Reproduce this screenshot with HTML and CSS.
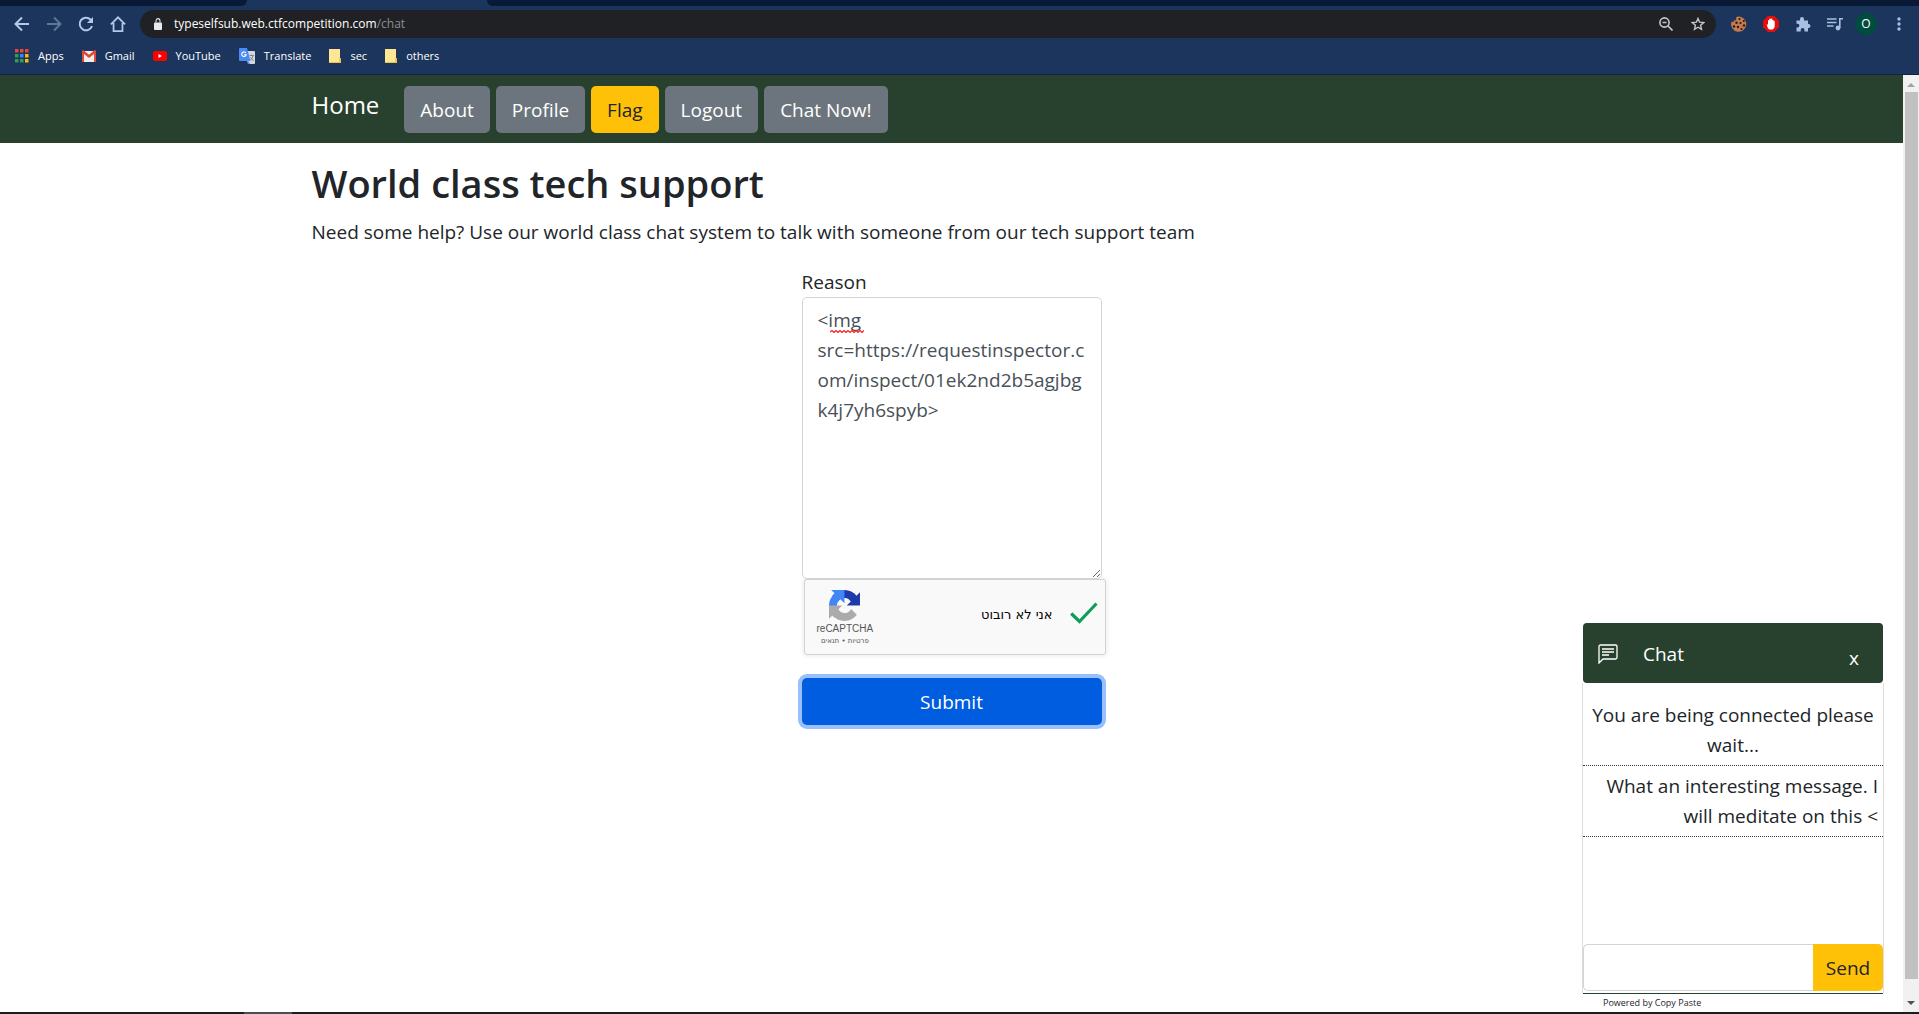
FILE: index.html
```html
<!DOCTYPE html>
<html lang="en">
<head>
<meta charset="utf-8">
<title>World class tech support</title>
<link rel="stylesheet" href="styles.css">
</head>
<body>
<header class="browser">
  <div class="tabstrip"><span class="tab-left"></span><span class="tab-active"></span><span class="tab-right"></span></div>
  <div class="toolbar">
    <div class="nav-icons">
      <button class="icon-btn" aria-label="Back"><svg width="16" height="16" viewBox="0 0 16 16" fill="none" stroke="#b4c8e8" stroke-width="2"><path d="M15 8H2M8 1.5L1.5 8L8 14.500"/></svg></button>
      <button class="icon-btn" aria-label="Forward"><svg width="16" height="16" viewBox="0 0 16 16" fill="none" stroke="#5f7698" stroke-width="2"><path d="M1 8H14M8 1.500L14.500 8L8 14.500"/></svg></button>
      <button class="icon-btn" aria-label="Reload"><svg width="16" height="16" viewBox="0 0 16 16" fill="none" stroke="#b4c8e8" stroke-width="2"><path d="M14 10A6.300 6.300 0 1 1 12.500 3.500L14 5"/><path d="M15 1v6H9z" fill="#b4c8e8" stroke="none"/></svg></button>
      <button class="icon-btn" aria-label="Home page"><svg width="16" height="16" viewBox="0 0 18 18" fill="none" stroke="#b4c8e8" stroke-width="2"><path d="M1 9.500L9 1.500L17 9.500M4 8v9h10V8"/></svg></button>
    </div>
    <div class="omnibox">
      <svg width="8" height="12" viewBox="0 0 10 13" preserveAspectRatio="none"><path d="M1 5h8a1 1 0 0 1 1 1v6a1 1 0 0 1-1 1H1a1 1 0 0 1-1-1V6a1 1 0 0 1 1-1z" fill="#e8eaed"/><path d="M2.500 5V3.200a2.500 2.500 0 0 1 5 0V5" fill="none" stroke="#e8eaed" stroke-width="1.300"/></svg>
      <span class="url">typeselfsub.web.ctfcompetition.com<span class="path">/chat</span></span>
      <svg width="14" height="14" viewBox="0 0 14 14" fill="none" stroke="#c4c7cc" stroke-width="1.600"><circle cx="5.500" cy="5.500" r="4.600"/><path d="M9 9l4.500 4.500M3.500 5.500h4"/></svg>
      <svg class="star" width="14" height="14" viewBox="0 0 14 14" fill="none" stroke="#c4c7cc" stroke-width="1.400"><path d="M7 1.500l1.600 3.700 4.100.4-3.100 2.700.9 4L7 10.200l-3.500 2.100.9-4L1.300 5.600l4.100-.4z"/></svg>
    </div>
    <div class="extensions">
      <svg width="16" height="16" viewBox="0 0 16 16"><path d="M6 .8a7.600 7.600 0 1 1-5.500 5C2 6.500 3 6 2.700 4.500 4.500 5 6 3.500 5 1.500z" fill="#c47a4e"/><g fill="#2a1b1b"><circle cx="8.500" cy="3" r="1.100"/><circle cx="12.800" cy="5" r="1.100"/><circle cx="5.500" cy="6.800" r="1.200"/><circle cx="9.500" cy="7" r="1.100"/><circle cx="13" cy="9.500" r="1.200"/><circle cx="3" cy="10.500" r="1.200"/><circle cx="7" cy="11" r="1.200"/><circle cx="10.500" cy="13" r="1.100"/></g></svg>
      <svg width="16" height="16" viewBox="0 0 16 16"><path d="M4.700 0h6.600L16 4.700v6.600L11.300 16H4.700L0 11.300V4.700z" fill="#e20f0f"/><path d="M5 12.500L3.600 8.500q.7-.7 1.400.6V4.500q.7-.8 1.300 0V3q.7-.8 1.400 0v-.2q.8-.7 1.400 0V4q.7-.7 1.300 0v1q.7-.5 1.300.2V10q0 2.500-2 3.500H6.500z" fill="#fff"/></svg>
      <svg width="16" height="16" viewBox="0 0 16 16"><path d="M1.500 4.500H5V3a2 2 0 0 1 4 0v1.500h4v3.500h.500a2 2 0 0 1 0 4H13v3.500H9.500V14a1.900 1.900 0 0 0-3.800 0v1.500H1.500V11.500H2.500a1.900 1.900 0 0 0 0-3.800h-1z" fill="#a9bfe2"/></svg>
      <svg width="16" height="14" viewBox="0 0 16 14" fill="none" stroke="#a9bfe2" stroke-width="1.600"><path d="M0 2h9.500M0 5.500h9.500M0 9h6.500M12.800 11V1.800H16"/><circle cx="11" cy="11" r="2.400" fill="#a9bfe2" stroke="none"/></svg>
      <span class="avatar">O</span>
      <svg class="dots" width="4" height="14" viewBox="0 0 4 14" fill="#a9bfe2"><circle cx="2" cy="2" r="1.700"/><circle cx="2" cy="7" r="1.700"/><circle cx="2" cy="12" r="1.700"/></svg>
    </div>
  </div>
  <nav class="bookmarks" aria-label="Bookmarks">
    <a href="#"><svg width="14" height="14" viewBox="0 0 14 14"><path d="M0 0h3.500v3.500H0zM5 0h3.500v3.500H5zM10 0h3.500v3.500H10z" fill="#e8453c"/><path d="M0 5h3.500v3.500H0zM0 10h3.500v3.500H0zM5 10h3.500v3.500H5z" fill="#2f9e53"/><path d="M5 5h3.500v3.500H5z" fill="#2f8cf0"/><path d="M10 5h3.500v3.500H10zM10 10h3.500v3.500H10z" fill="#f8b912"/></svg>Apps</a>
    <a href="#"><svg width="14" height="12" viewBox="0 0 14 12"><path d="M0 1h14v11H0z" fill="#eee"/><path d="M0 1.500Q0 0 1.400 0L7 4.800 12.600 0Q14 0 14 1.500V12h-2V4L7 8 2 4v8H0z" fill="#dd4b39"/></svg>Gmail</a>
    <a href="#"><svg width="14" height="12" viewBox="0 0 14 12"><rect y="1" width="14" height="10" rx="2.500" fill="#f00"/><path d="M5.500 4v4L9 6z" fill="#fff"/></svg>YouTube</a>
    <a href="#"><svg width="16" height="16" viewBox="0 0 16 16"><path d="M6 3h9q1 0 1 1v11q0 1-1 1H9z" fill="#d5d8dc"/><path d="M9 13l2 3H9.500z" fill="#3367d6"/><path d="M1 0h7l3.500 13H1q-1 0-1-1V1q0-1 1-1z" fill="#4a8af4"/><path d="M7 5A2.300 2.300 0 1 0 7.300 6.700H5" fill="none" stroke="#fff" stroke-width="1.100"/><path d="M10.500 7.500h4.500M12.500 6.500v1M14 7.500q-.5 3-2.500 4.500M11.500 9.500l3 3.500" fill="none" stroke="#7c8791"/></svg>Translate</a>
    <a href="#"><svg width="12" height="14" viewBox="0 0 12 14"><path d="M0 0h11v9h1v5H0z" fill="#ffe694"/><path d="M10 9h2v5h-2zM0 13h12v1H0z" fill="#ebc44c"/></svg>sec</a>
    <a href="#"><svg width="12" height="14" viewBox="0 0 12 14"><path d="M0 0h11v9h1v5H0z" fill="#ffe694"/><path d="M10 9h2v5h-2zM0 13h12v1H0z" fill="#ebc44c"/></svg>others</a>
  </nav>
</header>
<div class="viewport">
  <div class="page">
    <nav class="site-nav">
      <div class="container nav-row">
        <a class="brand" href="#">Home</a>
        <div class="nav-buttons">
          <a class="btn" href="#">About</a>
          <a class="btn" href="#">Profile</a>
          <a class="btn btn-warning" href="#">Flag</a>
          <a class="btn" href="#">Logout</a>
          <a class="btn" href="#">Chat Now!</a>
        </div>
      </div>
    </nav>
    <main class="container">
      <h1>World class tech support</h1>
      <p class="lead">Need some help? Use our world class chat system to talk with someone from our tech support team</p>
      <form class="reason-form">
        <label for="reason">Reason</label>
        <div class="reason-wrap">
          <textarea id="reason" spellcheck="false">&lt;img src=https://requestinspector.com/inspect/01ek2nd2b5agjbgk4j7yh6spyb&gt;</textarea>
          <svg class="squiggle" width="34" height="3" viewBox="0 0 34 3" fill="none" stroke="#f22" stroke-width="1.200"><path d="M0 2l2-1.500 2 2 2-2 2 2 2-2 2 2 2-2 2 2 2-2 2 2 2-2 2 2 2-2 2 2 2-2 2 2 2-2"/></svg>
        </div>
        <div class="captcha">
          <div class="captcha-brand">
            <svg width="31" height="31" viewBox="0 0 64 64"><path d="M64 31.955l-.033-1.370V4.687l-7.160 7.160C50.948 4.674 42.033.093 32.050.093c-10.400 0-19.622 4.960-25.458 12.640l11.736 11.860a15.550 15.550 0 0 1 4.754-5.334c2.050-1.600 4.952-2.906 8.968-2.906.485 0 .860.057 1.135.163 4.976.393 9.288 3.140 11.828 7.124l-8.307 8.307L64 31.953" fill="#1c3aa9"/><path d="M31.862.094l-1.370.033H4.594l7.160 7.160C4.580 13.147 0 22.060 0 32.046c0 10.400 4.960 19.622 12.640 25.458L24.500 45.768a15.550 15.550 0 0 1-5.334-4.754c-1.600-2.050-2.906-4.952-2.906-8.968 0-.485.057-.860.163-1.135.393-4.976 3.140-9.288 7.124-11.828l8.307 8.307L31.860.095" fill="#4285f4"/><path d="M.001 32.045l.033 1.370v25.898l7.160-7.160c5.860 7.173 14.774 11.754 24.760 11.754 10.400 0 19.622-4.960 25.458-12.640l-11.736-11.860a15.550 15.550 0 0 1-4.754 5.334c-2.050 1.600-4.952 2.906-8.968 2.906-.485 0-.860-.057-1.135-.163-4.976-.393-9.288-3.140-11.828-7.124l8.307-8.307c-10.522.040-22.400.066-27.295-.005" fill="#ababab"/></svg>
            <span class="captcha-name">reCAPTCHA</span>
            <span class="captcha-links" dir="rtl"><a href="#">פרטיות</a> • <a href="#">תנאים</a></span>
          </div>
          <span class="captcha-label" dir="rtl">אני לא רובוט</span>
          <svg class="captcha-check" width="28" height="22" viewBox="0 0 28 22" fill="none" stroke="#0f9d58" stroke-width="3.200"><path d="M1.200 11.500L9.500 19.500L26.500 1.500"/></svg>
        </div>
        <button class="submit" type="button">Submit</button>
      </form>
    </main>
  </div>
  <div class="scrollbar">
    <svg width="8" height="4" viewBox="0 0 8 4"><path d="M4 0l4 4H0z" fill="#a3a3a3"/></svg>
    <span class="thumb"></span>
    <svg width="8" height="4" viewBox="0 0 8 4"><path d="M0 0h8L4 4z" fill="#505050"/></svg>
  </div>
</div>
<section class="chat" aria-label="Chat">
  <div class="chat-head">
    <svg width="20" height="20" viewBox="0 0 20 20" fill="none" stroke="#fff" stroke-width="1.300"><path d="M1 19V2.500Q1 1 2.500 1h15Q19 1 19 2.500v11q0 1.500-1.500 1.500H5z"/><path d="M4 5h12M4 8h12M4 11h7"/></svg>
    <span class="chat-title">Chat</span>
    <button class="chat-close" aria-label="Close chat">x</button>
  </div>
  <div class="chat-body">
    <p class="msg msg-center">You are being connected please wait...</p>
    <p class="msg msg-right">What an interesting message. I will meditate on this &lt;</p>
  </div>
  <form class="chat-form">
    <input type="text" aria-label="Message">
    <button type="button">Send</button>
  </form>
  <p class="chat-foot">Powered by Copy Paste</p>
</section>
<footer class="taskbar"><span class="task-active"></span></footer>
</body>
</html>
```
FILE: styles.css
```css
* { box-sizing: border-box; }
body {
  margin: 0;
  min-height: 100vh;
  display: flex;
  flex-direction: column;
  background: #fff;
  color: #212529;
  font: 19px/30px "Open Sans", "Noto Sans", sans-serif;
}
a { color: inherit; text-decoration: none; }
button, input, textarea { font: inherit; color: inherit; }
svg { display: block; flex: none; }

/* Browser chrome */
.browser { background: #1b355c; border-bottom: 1px solid #10233f; height: 75px; color: #fff; font-size: 11px; line-height: 16px; }
.tabstrip { display: flex; height: 6px; background: #1b355c; }
.tab-left { width: 247px; background: #081a36; border-bottom-right-radius: 6px; }
.tab-active { width: 240px; }
.tab-right { flex: 1; background: #081a36; border-bottom-left-radius: 6px; }
.toolbar { display: flex; align-items: center; height: 36px; padding: 0 18px 0 14px; }
.nav-icons { display: flex; align-items: center; gap: 16px; width: 126px; }
.icon-btn { display: flex; border: 0; padding: 0; background: none; }
.omnibox { flex: 1; display: flex; align-items: center; height: 28px; padding: 0 11px 0 14px; border-radius: 14px; background: #202124; font-size: 12px; }
.url { flex: 1; padding-left: 12px; }
.path { color: #8b8f94; }
.star { margin-left: 18px; }
.extensions { display: flex; align-items: center; gap: 16px; padding-left: 15px; }
.avatar { width: 22px; height: 22px; margin: 0 -4px; border-radius: 50%; background: #004d40; text-align: center; font-size: 12px; line-height: 22px; }
.dots { margin-left: 8px; }
.bookmarks { display: flex; align-items: center; gap: 18px; height: 28px; padding-left: 15px; }
.bookmarks a { display: flex; align-items: center; gap: 9px; }

/* Page */
.viewport { flex: 1; display: flex; }
.page { flex: 1; }
.container { max-width: 1280px; margin: 0 auto; }
.site-nav { background: #28412f; padding: 11px 0 10px; }
.nav-row { display: flex; align-items: flex-start; gap: 25px; }
.brand { color: #fff; font-size: 24px; line-height: 38px; }
.nav-buttons { display: flex; gap: 6px; }
.btn { padding: 9px 16px 8px; border-radius: 5px; background: #6c757d; color: #fff; }
.btn-warning { background: #ffc107; color: #212529; }
h1 { margin: 16px 0 10px; font-size: 38px; line-height: 48px; font-weight: 600; }
.lead { margin: 0 0 20px; }
.reason-form { display: flex; flex-direction: column; width: 300px; margin: 0 auto; }
.reason-wrap { position: relative; }
textarea { display: block; width: 100%; height: 282px; padding: 7px 15px; border: 1px solid #ced4da; border-radius: 5px; background: #fff; color: #495057; word-break: break-word; }
.squiggle { position: absolute; left: 28px; top: 33px; }
.captcha { display: flex; align-items: center; width: 302px; height: 76px; margin-left: 2px; padding: 0 7px 0 12px; border: 1px solid #d3d3d3; border-radius: 3px; background: #f9f9f9; box-shadow: 0 0 4px 1px rgba(0,0,0,.08); color: #000; }
.captcha-brand { display: flex; flex-direction: column; align-items: center; padding-top: 2px; color: #555; }
.captcha-name { font: 10px/15px "Liberation Sans", sans-serif; }
.captcha-links { font: 7px/10px "DejaVu Sans", sans-serif; }
.captcha-label { flex: 1; padding: 0 17px 4px 0; font: 13px/18px "DejaVu Sans", sans-serif; }
.captcha-check { margin-bottom: 8px; }
.submit { margin-top: 23px; padding: 9px 16px 8px; border: 0; border-radius: 5px; background: #005de0; color: #fff; box-shadow: 0 0 0 4px #98c0fc; }

/* Decorative page scrollbar */
.scrollbar { display: flex; flex-direction: column; align-items: center; gap: 8px; width: 16px; padding: 8px 0 7px; background: #f1f1f1; }
.thumb { flex: 1; width: 13px; margin: -3px 0 14px; background: #c1c1c1; }

/* Chat widget */
.chat { position: fixed; right: 35px; bottom: 2px; width: 302px; background: #fff; }
.chat-head { display: flex; align-items: center; height: 60px; margin: 0 1px; padding: 2px 24px 0 15px; border-radius: 4px; background: #28412f; color: #fff; }
.chat-title { flex: 1; padding-left: 25px; }
.chat-close { padding: 8px 0 0; border: 0; background: none; line-height: 30px; }
.chat-body { height: 261px; padding-top: 12px; border: solid #ddd; border-width: 0 1px; }
.msg { margin: 0; padding: 5px; border-bottom: 1px dotted #28412f; }
.msg-center { text-align: center; }
.msg-right { text-align: right; }
.chat-form { display: flex; padding-bottom: 2px; border: solid #ddd; border-width: 0 1px; }
.chat-form input { flex: 1; min-width: 0; height: 47px; padding: 8px 15px; border: 1px solid #ced4da; border-right: 0; border-radius: 5px 0 0 5px; background: #fff; }
.chat-form button { width: 70px; padding: 9px 0 8px; border: 0; border-radius: 0 5px 5px 0; background: #ffc107; }
.chat-foot { margin: 0 1px; padding-left: 20px; border-top: 1px solid #28412f; font-size: 9px; line-height: 18px; }

.taskbar { display: flex; height: 2px; background: #1b1b26; }
.task-active { width: 48px; margin-left: 244px; background: #4c4c50; }
```
